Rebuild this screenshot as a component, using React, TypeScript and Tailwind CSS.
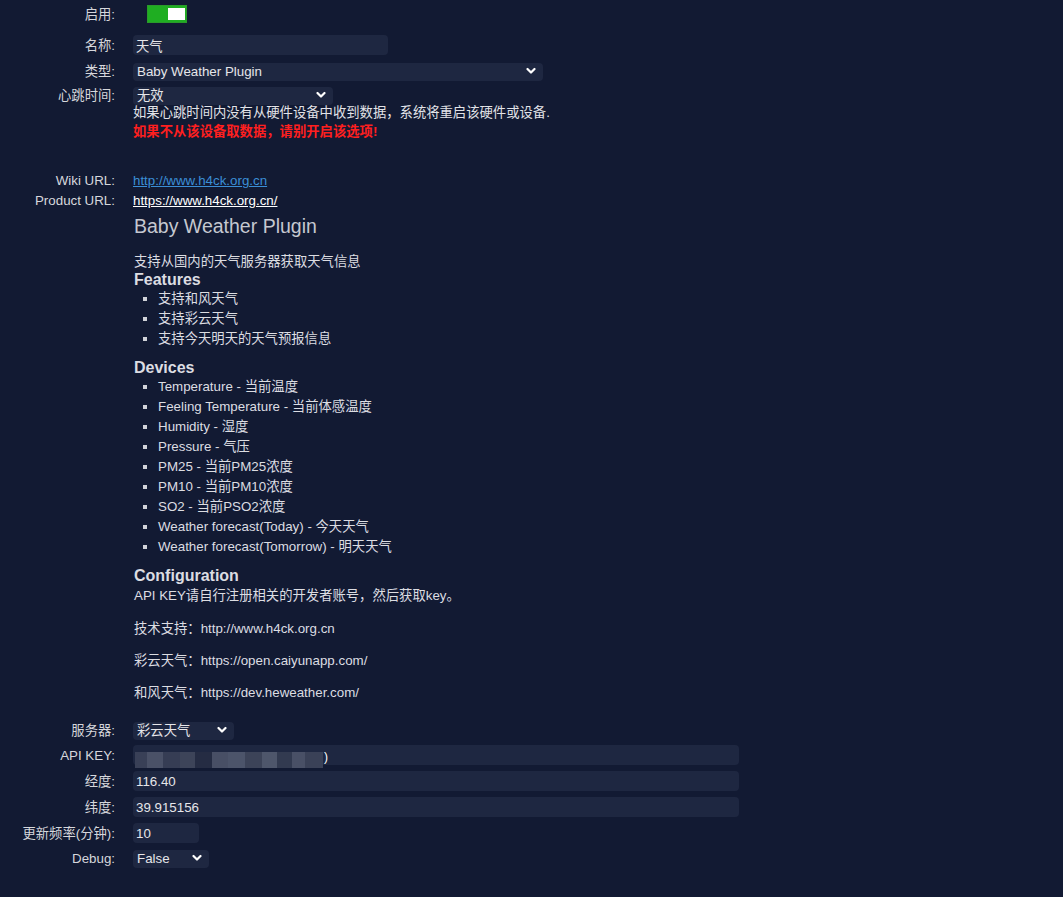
import React from "react";

const FONT = "font-['Liberation_Sans','Noto_Sans_CJK_SC',sans-serif]";

function Chevron() {
  return (
    <svg
      className="pointer-events-none absolute right-[7px] top-1/2 -translate-y-1/2"
      width="10"
      height="7"
      viewBox="0 0 10 7"
      fill="none"
    >
      <path d="M1.5 1.5 L5 5 L8.5 1.5" stroke="#ffffff" strokeWidth="2.2" strokeLinecap="round" strokeLinejoin="round" />
    </svg>
  );
}

function Select({ value, w, h = "h-[18px]" }: { value: string; w: string; h?: string }) {
  return (
    <div className={`relative ${w} ${h}`}>
      <select
        defaultValue={value}
        className={`appearance-none w-full h-full rounded-[4px] bg-[#1e2741] text-[#e6e6ea] text-[13.33px] pl-[4px] pr-5 leading-[18px] outline-none border-0 ${FONT}`}
      >
        <option value={value}>{value}</option>
      </select>
      <Chevron />
    </div>
  );
}

function Input({ value, w }: { value: string; w: string }) {
  return (
    <input
      readOnly
      value={value}
      className={`${w} h-[20px] rounded-[4px] bg-[#1e2741] text-[#e6e6ea] text-[13.33px] px-[3px] outline-none border-0 ${FONT}`}
    />
  );
}

function Row({ label, children, h, mt }: { label: string; children: React.ReactNode; h: string; mt: string }) {
  return (
    <div className={`flex items-center ${h} ${mt}`}>
      <div className="w-[115px] shrink-0 text-right text-[13.33px] leading-[19px] text-[#d6d7dc]">{label}</div>
      <div className="ml-[18px] flex items-center">{children}</div>
    </div>
  );
}

const mosaic = [
  { w: 12, c: "#394057" },
  { w: 16, c: "#4a5167" },
  { w: 17, c: "#363d54" },
  { w: 15, c: "#3d4459" },
  { w: 17, c: "#252c43" },
  { w: 16, c: "#484f65" },
  { w: 17, c: "#4c546a" },
  { w: 17, c: "#3c4358" },
  { w: 15, c: "#4e566b" },
  { w: 15, c: "#323a50" },
  { w: 13, c: "#495066" },
  { w: 18, c: "#3a4157" },
];

export default function App() {
  return (
    <div className={`min-h-[897px] w-full bg-[#121a33] text-[#d6d7dc] text-[13.33px] pt-[5px] ${FONT}`}>
      <Row label="启用:" h="h-[18px]" mt="mt-0">
        <div className="ml-[14px] w-[40px] h-[18px] bg-[#1fae22] border border-[#2a9a2a] flex items-center justify-end pr-[1px]">
          <div className="w-[17px] h-[12px] bg-white" />
        </div>
      </Row>
      <Row label="名称:" h="h-[20px]" mt="mt-[12px]">
        <Input value="天气" w="w-[255px]" />
      </Row>
      <Row label="类型:" h="h-[18px]" mt="mt-[7px]">
        <Select value="Baby Weather Plugin" w="w-[410px]" />
      </Row>
      <Row label="心跳时间:" h="h-[18px]" mt="mt-[6px]">
        <Select value="无效" w="w-[200px]" />
      </Row>
      <div className="pl-[133px] leading-[19px] mt-[-1px]">
        <div className="text-[#e2e3e8]">如果心跳时间内没有从硬件设备中收到数据，系统将重启该硬件或设备.</div>
        <div className="text-[#ff1f1f] font-bold">如果不从该设备取数据，请别开启该选项!</div>
      </div>

      <Row label="Wiki URL:" h="h-[19px]" mt="mt-[30px]">
        <a className="text-[#3b8ed6] underline leading-[19px]" href="#">http://www.h4ck.org.cn</a>
      </Row>
      <Row label="Product URL:" h="h-[19px]" mt="mt-[1px]">
        <a className="text-white underline leading-[19px]" href="#">https://www.h4ck.org.cn/</a>
      </Row>

      <div className="pl-[134px]">
        <div className="mt-[4px] text-[19.5px] leading-[24px] text-[#c5c8d0]">Baby Weather Plugin</div>
        <p className="mt-[15px] leading-[18px] text-[#dcdde2]">支持从国内的天气服务器获取天气信息</p>
        <div className="text-[16px] font-bold leading-[18px] text-[#dcdde2]">Features</div>
        <ul className="list-[square] pl-[24px] leading-[20px] text-[#dcdde2] marker:text-[#d0d2d8]">
          <li>支持和风天气</li>
          <li>支持彩云天气</li>
          <li>支持今天明天的天气预报信息</li>
        </ul>
        <div className="mt-[10px] text-[16px] font-bold leading-[18px] text-[#dcdde2]">Devices</div>
        <ul className="list-[square] pl-[24px] leading-[20px] text-[#dcdde2] marker:text-[#d0d2d8]">
          <li>Temperature - 当前温度</li>
          <li>Feeling Temperature - 当前体感温度</li>
          <li>Humidity - 湿度</li>
          <li>Pressure - 气压</li>
          <li>PM25 - 当前PM25浓度</li>
          <li>PM10 - 当前PM10浓度</li>
          <li>SO2 - 当前PSO2浓度</li>
          <li>Weather forecast(Today) - 今天天气</li>
          <li>Weather forecast(Tomorrow) - 明天天气</li>
        </ul>
        <div className="mt-[10px] text-[16px] font-bold leading-[18px] text-[#dcdde2]">Configuration</div>
        <p className="leading-[22px] text-[#dcdde2]">API KEY请自行注册相关的开发者账号，然后获取key。</p>
        <p className="mt-[12px] leading-[19px] text-[#dcdde2]">技术支持：http://www.h4ck.org.cn</p>
        <p className="mt-[13px] leading-[19px] text-[#dcdde2]">彩云天气：https://open.caiyunapp.com/</p>
        <p className="mt-[13px] leading-[19px] text-[#dcdde2]">和风天气：https://dev.heweather.com/</p>
      </div>

      <Row label="服务器:" h="h-[18px]" mt="mt-[19px]">
        <Select value="彩云天气" w="w-[101px]" />
      </Row>
      <Row label="API KEY:" h="h-[20px]" mt="mt-[6px]">
        <div className="relative">
          <Input value="" w="w-[606px]" />
          <div className="absolute left-[2px] top-[7px] flex h-[16px]">
            {mosaic.map((m, i) => (
              <div key={i} style={{ width: m.w, backgroundColor: m.c }} />
            ))}
            <span className="ml-[1px] text-[12px] leading-[10px] text-white">)</span>
          </div>
        </div>
      </Row>
      <Row label="经度:" h="h-[20px]" mt="mt-[6px]">
        <Input value="116.40" w="w-[606px]" />
      </Row>
      <Row label="纬度:" h="h-[20px]" mt="mt-[6px]">
        <Input value="39.915156" w="w-[606px]" />
      </Row>
      <Row label="更新频率(分钟):" h="h-[20px]" mt="mt-[6px]">
        <Input value="10" w="w-[66px]" />
      </Row>
      <Row label="Debug:" h="h-[18px]" mt="mt-[6px]">
        <Select value="False" w="w-[76px]" />
      </Row>
    </div>
  );
}
